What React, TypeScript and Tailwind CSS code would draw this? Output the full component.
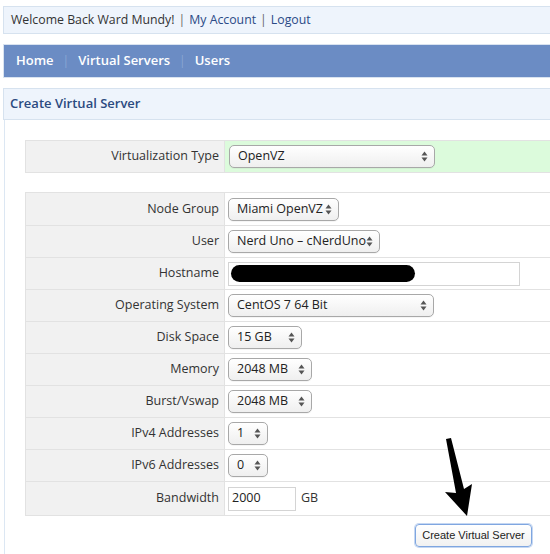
import React from "react";

const Arrows = () => (
  <svg width="7" height="11" viewBox="0 0 7 11" className="shrink-0">
    <path d="M3.5 0.5 L6.5 4.5 L0.5 4.5 Z" fill="#555" />
    <path d="M3.5 10.5 L6.5 6.5 L0.5 6.5 Z" fill="#555" />
  </svg>
);

const Select = ({ text, w }: { text: string; w: number }) => (
  <div
    className="h-[23px] rounded-[5px] border border-[#a8a8a8] bg-gradient-to-b from-white to-[#efefef] flex items-center justify-between pl-[8px] pr-[6px] text-[12.5px] text-[#222] shadow-[0_1px_0_rgba(0,0,0,0.04)]"
    style={{ width: w }}
  >
    <span className="whitespace-nowrap">{text}</span>
    <Arrows />
  </div>
);

const Row = ({ label, children, last, h = 32 }: { label: string; children: React.ReactNode; last?: boolean; h?: number }) => (
  <div className={`flex ${last ? "" : "border-b border-[#e2e2e2]"}`} style={{ height: h }}>
    <div className="w-[199px] shrink-0 bg-[#f1f1f1] border-r border-[#e2e2e2] flex items-center justify-end pr-[5px] text-[12.5px] text-[#333]">
      {label}
    </div>
    <div className="flex-1 flex items-center pl-[3px]">{children}</div>
  </div>
);

export default function App() {
  return (
    <div
      className="w-[550px] h-[554px] overflow-hidden bg-white relative"
      style={{ fontFamily: '"Open Sans", "DejaVu Sans", sans-serif' }}
    >
      <div className="w-[570px] pl-[3px] pt-[6px]">
        {/* top bar */}
        <div className="h-[28px] border border-[#d6e2ef] bg-[#eef4fc] flex items-center pl-[7px] text-[12.3px] text-[#333]">
          <span>Welcome Back Ward Mundy!</span>
          <span className="mx-[4px] text-[#666]">|</span>
          <span className="text-[#2b4a86]">My Account</span>
          <span className="mx-[4px] text-[#666]">|</span>
          <span className="text-[#2b4a86]">Logout</span>
        </div>

        {/* nav */}
        <div className="mt-[10px] h-[34px] bg-[#6b8cc4] border border-[#d9e3f0] flex items-center pl-[12px] text-[13px] font-semibold text-white">
          <span>Home</span>
          <span className="mx-[9px] text-[#8aa6d4] font-normal text-[12px]">|</span>
          <span>Virtual Servers</span>
          <span className="mx-[9px] text-[#8aa6d4] font-normal text-[12px]">|</span>
          <span>Users</span>
        </div>

        {/* header */}
        <div className="mt-[10px] h-[32px] bg-[#eef4fc] border border-[#d6e2ef] flex items-center pl-[6px] text-[13px] font-semibold text-[#2b4a80]">
          Create Virtual Server
        </div>

        {/* panel */}
        <div className="ml-[1px] border-l border-[#dce7f3] pl-[20px] pt-[20px] h-[440px]">
          <div className="border-y border-l border-[#e2e2e2] flex h-[33px]">
            <div className="w-[199px] shrink-0 bg-[#f1f1f1] border-r border-[#e2e2e2] flex items-center justify-end pr-[5px] text-[12.5px] text-[#333]">
              Virtualization Type
            </div>
            <div className="flex-1 bg-[#dcfbdc] flex items-center pl-[4px]">
              <Select text="OpenVZ" w={206} />
            </div>
          </div>

          <div className="mt-[19px] border-y border-l border-[#e2e2e2]">
            <Row label="Node Group" h={33}>
              <Select text="Miami OpenVZ" w={111} />
            </Row>
            <Row label="User">
              <Select text="Nerd Uno – cNerdUno" w={152} />
            </Row>
            <Row label="Hostname">
              <div className="w-[292px] h-[24px] border border-[#d4d4d4] bg-white flex items-center pl-[2px]">
                <div className="w-[184px] h-[17px] rounded-full bg-black" />
              </div>
            </Row>
            <Row label="Operating System">
              <Select text="CentOS 7 64 Bit" w={206} />
            </Row>
            <Row label="Disk Space">
              <Select text="15 GB" w={74} />
            </Row>
            <Row label="Memory">
              <Select text="2048 MB" w={84} />
            </Row>
            <Row label="Burst/Vswap">
              <Select text="2048 MB" w={84} />
            </Row>
            <Row label="IPv4 Addresses">
              <Select text="1" w={40} />
            </Row>
            <Row label="IPv6 Addresses">
              <Select text="0" w={40} />
            </Row>
            <Row label="Bandwidth" last h={33}>
              <div className="w-[68px] h-[24px] border border-[#d4d4d4] bg-white flex items-center pl-[3px] text-[12.5px] text-[#222]">
                2000
              </div>
              <span className="ml-[5px] text-[12.5px] text-[#333]">GB</span>
            </Row>
          </div>

          <div className="mt-[8px] ml-[390px] w-[117px] h-[23px] rounded-[4px] border border-[#7fa6e0] bg-gradient-to-b from-white to-[#f1f1f1] flex items-center justify-center text-[11px] text-[#222] shadow-[0_0_0_1px_rgba(140,175,230,0.5)]"
            style={{ fontFamily: '"Liberation Sans", Arial, sans-serif' }}>
            Create Virtual Server
          </div>
        </div>
      </div>

      <svg className="absolute left-0 top-0 pointer-events-none" width="550" height="554" viewBox="0 0 550 554">
        <polygon points="446,439 451,438 464,489 472,484 467,516 445,492 456,493" fill="#000" />
      </svg>
    </div>
  );
}
